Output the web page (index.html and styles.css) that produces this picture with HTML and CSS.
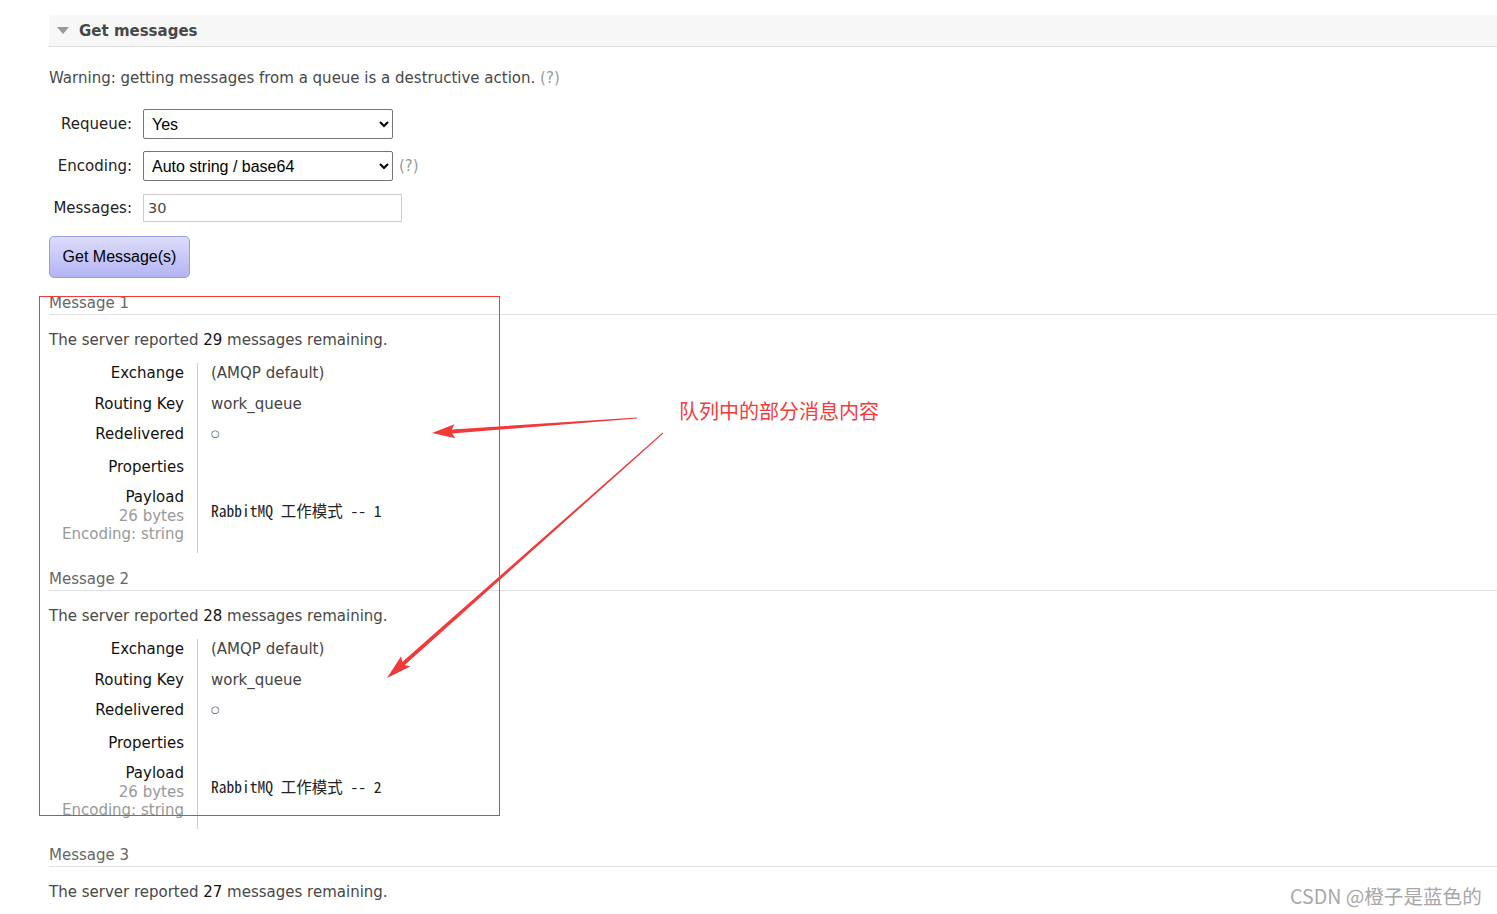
FILE: index.html
```html
<!DOCTYPE html>
<html lang="en">
<head>
    <meta charset="UTF-8">
    <title>Get messages</title>
    <link rel="stylesheet" href="styles.css">
</head>
<body>

<div class="page">
    <!-- Section header -->
    <div class="section-header">
        <span class="toggle"></span>
        <h2>Get messages</h2>
    </div>

    <div class="section-body">
        <p class="warning">Warning: getting messages from a queue is a destructive action. <span class="help">(?)</span></p>

        <!-- Form -->
        <div class="form">
            <label>Requeue:</label>
            <div class="field">
                <select class="select"><option>Yes</option><option>No</option></select>
            </div>
            <label>Encoding:</label>
            <div class="field">
                <select class="select"><option>Auto string / base64</option><option>base64</option></select>
                <span class="help">(?)</span>
            </div>
            <label>Messages:</label>
            <div class="field">
                <input class="input" type="text" value="30">
            </div>
        </div>

        <button class="get-btn">Get Message(s)</button>

        <!-- Message 1 -->
        <div class="message">
            <h3>Message 1</h3>
            <p class="remaining">The server reported <b>29</b> messages remaining.</p>
            <table class="details">
                <tr class="first"><th>Exchange</th><td>(AMQP default)</td></tr>
                <tr><th>Routing Key</th><td>work_queue</td></tr>
                <tr class="redelivered"><th>Redelivered</th><td>&#9675;</td></tr>
                <tr><th>Properties</th><td></td></tr>
                <tr>
                    <th>Payload<sub>26 bytes</sub><sub>Encoding: string</sub></th>
                    <td><pre>RabbitMQ 工作模式 -- 1</pre></td>
                </tr>
            </table>
        </div>

        <!-- Message 2 -->
        <div class="message">
            <h3>Message 2</h3>
            <p class="remaining">The server reported <b>28</b> messages remaining.</p>
            <table class="details">
                <tr class="first"><th>Exchange</th><td>(AMQP default)</td></tr>
                <tr><th>Routing Key</th><td>work_queue</td></tr>
                <tr class="redelivered"><th>Redelivered</th><td>&#9675;</td></tr>
                <tr><th>Properties</th><td></td></tr>
                <tr>
                    <th>Payload<sub>26 bytes</sub><sub>Encoding: string</sub></th>
                    <td><pre>RabbitMQ 工作模式 -- 2</pre></td>
                </tr>
            </table>
        </div>

        <!-- Message 3 -->
        <div class="message">
            <h3>Message 3</h3>
            <p class="remaining">The server reported <b>27</b> messages remaining.</p>
        </div>
    </div>
</div>

<!-- Annotation layer -->
<svg class="annotations" width="1497" height="914" viewBox="0 0 1497 914">
    <rect x="39.5" y="296.5" width="460" height="519" fill="none" stroke="#f03c3c" stroke-width="1"/>
    <polygon fill="#f03a3a" points="637,417.4 451.9,429.5 454.4,424.3 432,433 455.4,438.3 452.1,433.5 637,418.6"/>
    <polygon fill="#f03a3a" points="662.7,432.6 402.2,661.9 401.1,656.2 387,678 410.3,666.6 404.8,664.9 663.3,433.4"/>
</svg>
<div class="note">队列中的部分消息内容</div>
<div class="watermark">CSDN @橙子是蓝色的</div>

</body>
</html>
```

FILE: styles.css
```css
/* Global */
body {
    margin: 0;
    font-family: 'DejaVu Sans', Verdana, sans-serif;
    font-size: 15px;
    color: #484848;
    background: #fff;
    width: 1497px;
    height: 914px;
    overflow: hidden;
    position: relative;
}

.page {
    padding: 15px 0 0 49px;
}

/* Section header */
.section-header {
    display: flex;
    align-items: center;
    height: 31px;
    background: #f7f7f7;
    border-bottom: 1px solid #ddd;
    padding-left: 8px;
}

.toggle {
    width: 0;
    height: 0;
    border-left: 6.5px solid transparent;
    border-right: 6.5px solid transparent;
    border-top: 7px solid #999;
    margin-right: 10px;
}

.section-header h2 {
    margin: 0;
    font-size: 15px;
    font-weight: bold;
    color: #484848;
}

/* Body */
.warning {
    margin: 21px 0 0;
    line-height: 20px;
}

.help {
    color: #999;
}

.form {
    display: grid;
    grid-template-columns: 83px auto;
    column-gap: 11px;
    row-gap: 12px;
    align-items: center;
    margin-top: 21px;
}

.form label {
    text-align: right;
    color: #222;
}

.field {
    display: flex;
    align-items: center;
    gap: 6px;
}

.select {
    width: 250px;
    height: 30px;
    font-family: 'Liberation Sans', Arial, sans-serif;
    font-size: 16px;
    color: #000;
    border: 1px solid #767676;
    border-radius: 2px;
    background: #fff;
    padding: 0 4px;
}

.input {
    width: 259px;
    height: 28px;
    box-sizing: border-box;
    border: 1px solid #ccc;
    font-family: 'DejaVu Sans', Verdana, sans-serif;
    font-size: 14.5px;
    color: #484848;
    padding: 0 4px;
    margin-top: 1px;
}

/* Button */
.get-btn {
    margin-top: 14px;
    width: 141px;
    height: 42px;
    font-family: 'Liberation Sans', Arial, sans-serif;
    font-size: 16px;
    color: #000;
    background: linear-gradient(#dcdcfb, #b4b4f4);
    border: 1px solid #9b9be0;
    border-radius: 5px;
    padding: 0;
    display: block;
}

/* Messages */
.message {
    margin-top: 16px;
}

.get-btn + .message {
    margin-top: 15px;
}

.message h3 {
    margin: 0;
    font-size: 15px;
    font-weight: normal;
    color: #666;
    line-height: 20px;
    padding-bottom: 1px;
    border-bottom: 1px solid #e0e0e0;
}

.remaining {
    margin: 15px 0 0;
    line-height: 20px;
}

.remaining b {
    font-weight: normal;
    color: #111;
}

.details {
    border-collapse: collapse;
    margin-top: 13px;
}

.details th {
    text-align: right;
    font-weight: normal;
    color: #111;
    line-height: 20px;
    padding: 0 13px 10px 0;
    width: 135px;
    vertical-align: top;
    white-space: nowrap;
}

.details td {
    border-left: 1px solid #ccc;
    padding: 0 0 10px 13px;
    line-height: 20px;
    vertical-align: top;
    color: #444;
}

.details .first th,
.details .first td {
    padding-bottom: 11px;
}

.details .redelivered th,
.details .redelivered td {
    padding-bottom: 13px;
}

.details .redelivered td {
    font-size: 10px;
}

.details sub {
    display: block;
    font-size: 15px;
    line-height: 18px;
    color: #999;
    vertical-align: baseline;
}

.details pre {
    margin: 0;
    padding-top: 13px;
    font-family: 'Noto Sans Mono CJK SC', 'Liberation Mono', 'Noto Sans CJK SC', monospace;
    font-size: 15.5px;
    line-height: 20px;
    color: #222;
}

/* Annotations */
.annotations {
    position: absolute;
    top: 0;
    left: 0;
    pointer-events: none;
}

.note {
    position: absolute;
    left: 679px;
    top: 398px;
    font-family: 'Noto Sans CJK SC', sans-serif;
    font-size: 20px;
    line-height: 26px;
    color: #f23c3c;
}

.watermark {
    position: absolute;
    left: 1290px;
    top: 883px;
    font-family: 'Noto Sans CJK SC', sans-serif;
    font-size: 19.6px;
    line-height: 26px;
    color: #a8a8a8;
}
```
